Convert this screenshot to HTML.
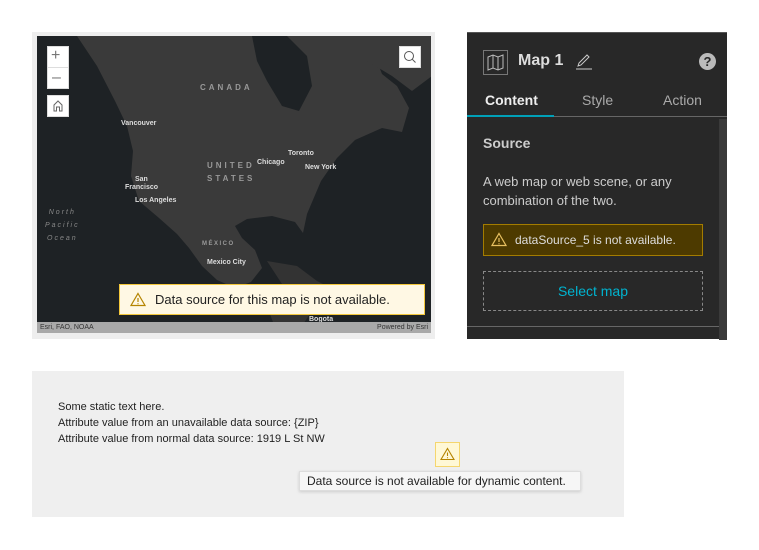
<!DOCTYPE html>
<html><head><meta charset="utf-8">
<style>
*{box-sizing:border-box;margin:0;padding:0}
body{width:759px;height:550px;background:#fff;font-family:"Liberation Sans",sans-serif;position:relative;overflow:hidden}
.abs{position:absolute}
.mapframe{left:32px;top:32px;width:403px;height:307px;background:#eeeeee}
.map{left:37px;top:36px;width:394px;height:297px;background:#1e2225;overflow:hidden}
.lbl{position:absolute;color:#ddd;font-size:7px;font-weight:bold;white-space:nowrap}
.cty{position:absolute;color:#999;font-size:8px;letter-spacing:3px;font-weight:bold}
.btn{position:absolute;background:#fff;border:1px solid #ddd}
.panel{left:467px;top:32px;width:260px;height:307px;background:#282828;border-top:1px solid #555}
</style></head><body>
<div class="abs mapframe"></div>
<div class="abs map">
<svg width="394" height="297" style="position:absolute;left:0;top:0">
<path fill="#3a3a3a" d="M40 0 L60 30 L78 65 L90 90 L96 115 L94 140 L102 165 L122 182 L140 198 L152 212 L165 230 L180 244 L198 252 L214 246 L225 232 L218 214 L205 202 L198 190 L210 183 L235 180 L258 186 L266 197 L270 178 L284 145 L300 122 L318 104 L345 92 L365 96 L372 72 L360 50 L345 38 L338 20 L330 0 Z"/>
<path fill="#1e2225" d="M215 0 L250 0 L270 20 L275 50 L262 75 L245 70 L230 45 L220 25 Z"/>
<path fill="#3a3a3a" d="M280 0 L395 0 L395 40 L375 55 L355 40 L330 25 Z"/>
<path fill="#333" d="M230 225 L260 230 L280 245 L300 255 L330 262 L300 265 L270 258 L245 248 Z"/>
<path fill="#333" d="M235 250 L260 255 L275 275 L260 297 L240 297 L230 270 Z"/>
</svg>
<div class="btn" style="left:10px;top:10px;width:22px;height:43px"></div>
<div class="abs" style="left:10px;top:31px;width:22px;height:1px;background:#ddd"></div>
<div class="abs" style="left:14px;top:11px;font-size:16px;color:#777;line-height:18px">+</div>
<div class="abs" style="left:15px;top:33px;font-size:16px;color:#777;line-height:18px">–</div>
<div class="btn" style="left:10px;top:59px;width:22px;height:22px"><svg width="20" height="20"><path d="M6 15V9L10 5L14 9V15H11.5V11H8.5V15Z" fill="none" stroke="#666"/></svg></div>
<div class="btn" style="left:362px;top:10px;width:22px;height:22px"><svg width="20" height="20"><circle cx="9" cy="9" r="4.5" fill="none" stroke="#555"/><path d="M12.3 12.3L15.5 15.5" stroke="#555"/></svg></div>
<div class="cty" style="left:163px;top:47px">CANADA</div>
<div class="cty" style="left:170px;top:125px">UNITED</div>
<div class="cty" style="left:170px;top:138px">STATES</div>
<div class="cty" style="left:165px;top:205px;font-size:6px;letter-spacing:1.5px">MÉXICO</div>
<div class="lbl" style="left:84px;top:84px">Vancouver</div>
<div class="lbl" style="left:220px;top:123px">Chicago</div>
<div class="lbl" style="left:251px;top:114px">Toronto</div>
<div class="lbl" style="left:268px;top:128px">New York</div>
<div class="lbl" style="left:98px;top:140px">San</div>
<div class="lbl" style="left:88px;top:148px">Francisco</div>
<div class="lbl" style="left:98px;top:161px">Los Angeles</div>
<div class="lbl" style="left:170px;top:223px">Mexico City</div>
<div class="lbl" style="left:272px;top:280px">Bogota</div>
<div class="abs" style="left:8px;top:170px;color:#888;font-size:7px;font-style:italic;letter-spacing:2px;line-height:13px;text-align:center">North<br>Pacific<br>Ocean</div>
<div class="abs" style="left:82px;top:248px;width:306px;height:31px;background:#fff8e4;border:1px solid #f3c73b"></div>
<svg class="abs" style="left:93px;top:256px" width="16" height="15"><path d="M8 1.5L15 13.5H1Z" fill="none" stroke="#b58400" stroke-width="1.2"/><path d="M8 6V10M8 11.3V12.3" stroke="#b58400" stroke-width="1.2"/></svg>
<div class="abs" style="left:118px;top:256px;font-size:13px;color:#222">Data source for this map is not available.</div>
<div class="abs" style="left:0;top:286px;width:394px;height:11px;background:#a9a9a9;font-size:7px;color:#333;padding:1px 3px;line-height:9px">Esri, FAO, NOAA<span style="float:right">Powered by Esri</span></div>
</div>

<div class="abs panel">
<div class="abs" style="left:16px;top:17px;width:25px;height:25px;border:1px solid #777"><svg width="23" height="23"><path d="M4 6L9 4L14 6L19 4V17L14 19L9 17L4 19Z M9 4V17 M14 6V19" fill="none" stroke="#bbb" stroke-width="1"/></svg></div>
<div class="abs" style="left:51px;top:19px;font-size:16px;font-weight:bold;color:#ddd">Map 1</div>
<svg class="abs" style="left:108px;top:20px" width="18" height="18"><path d="M3 13L4 10L12 2L14 4L6 12Z" fill="none" stroke="#ccc"/><path d="M1 16H17" stroke="#ccc"/></svg>
<div class="abs" style="left:232px;top:20px;width:17px;height:17px;border-radius:50%;background:#bbb;color:#282828;font-size:13px;font-weight:bold;text-align:center;line-height:17px">?</div>
<div class="abs" style="left:18px;top:59px;font-size:14px;font-weight:bold;color:#eee">Content</div>
<div class="abs" style="left:115px;top:59px;font-size:14px;color:#aaa">Style</div>
<div class="abs" style="left:196px;top:59px;font-size:14px;color:#aaa">Action</div>
<div class="abs" style="left:0;top:83px;width:260px;height:1px;background:#666"></div>
<div class="abs" style="left:0;top:82px;width:87px;height:2px;background:#00a0b8"></div>
<div class="abs" style="left:252px;top:86px;width:8px;height:221px;background:#3a3a3a"></div>
<div class="abs" style="left:16px;top:102px;font-size:14px;font-weight:bold;color:#ccc">Source</div>
<div class="abs" style="left:16px;top:139px;font-size:13px;color:#ccc;line-height:19px">A web map or web scene, or any<br>combination of the two.</div>
<div class="abs" style="left:16px;top:191px;width:220px;height:32px;background:#4d3a00;border:1px solid #a37c00"></div>
<svg class="abs" style="left:24px;top:199px" width="16" height="15"><path d="M8 1.5L15 13.5H1Z" fill="none" stroke="#e8c060" stroke-width="1.2"/><path d="M8 6V10M8 11.3V12.3" stroke="#e8c060" stroke-width="1.2"/></svg>
<div class="abs" style="left:48px;top:200px;font-size:12px;color:#ddd">dataSource_5 is not available.</div>
<div class="abs" style="left:16px;top:238px;width:220px;height:40px;border:1px dashed #888;color:#00b4d0;font-size:14px;text-align:center;line-height:38px">Select map</div>
<div class="abs" style="left:0;top:293px;width:252px;height:1px;background:#666"></div>
</div>

<div class="abs" style="left:32px;top:371px;width:592px;height:146px;background:#efefef"></div>
<div class="abs" style="left:58px;top:399px;font-size:11px;color:#222;line-height:16px">Some static text here.<br>Attribute value from an unavailable data source: {ZIP}<br>Attribute value from normal data source: 1919 L St NW</div>
<div class="abs" style="left:435px;top:442px;width:25px;height:25px;background:#fff8d6;border:1px solid #f5d66e"></div>
<svg class="abs" style="left:440px;top:447px" width="15" height="14"><path d="M7.5 1.5L14 12.5H1Z" fill="none" stroke="#b58400" stroke-width="1.1"/><path d="M7.5 5.5V9M7.5 10.3V11.3" stroke="#b58400" stroke-width="1.1"/></svg>
<div class="abs" style="left:299px;top:471px;width:282px;height:20px;background:#f6f6f6;border:1px solid #ddd;box-shadow:0 1px 3px rgba(0,0,0,.15);font-size:12px;color:#222;line-height:18px;padding-left:7px">Data source is not available for dynamic content.</div>
</body></html>
